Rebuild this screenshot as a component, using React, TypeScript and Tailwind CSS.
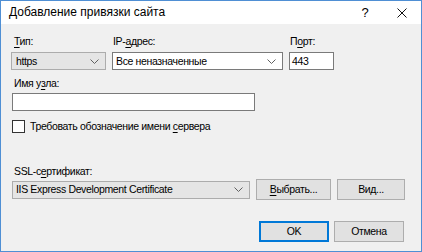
import React from "react";

function Chevron() {
  return (
    <svg width="9" height="5" viewBox="0 0 9 5" className="shrink-0">
      <path d="M0.5 0.5 L4.5 4.5 L8.5 0.5" fill="none" stroke="#606060" strokeWidth="1" />
    </svg>
  );
}

function U({ children }: { children: React.ReactNode }) {
  return <span className="underline underline-offset-[2px] decoration-1">{children}</span>;
}

function Button({
  children,
  className = "",
  primary = false,
}: {
  children: React.ReactNode;
  className?: string;
  primary?: boolean;
}) {
  return (
    <div
      className={
        "h-[21px] flex items-center justify-center bg-[#e1e1e1] border " +
        (primary ? "border-[#0078d7] shadow-[inset_0_0_0_1px_#0078d7]" : "border-[#adadad]") +
        " " +
        className
      }
    >
      {children}
    </div>
  );
}

export default function App() {
  return (
    <div className="w-[422px] h-[252px] flex flex-col border border-[#4f8fd4] bg-[#f0f0f0] text-[10.5px] tracking-[-0.35px] leading-[15px] text-black font-['Liberation_Sans','Noto_Sans',sans-serif]">
      <div className="h-[23px] shrink-0 bg-white flex items-center pl-[8px] text-[12px] tracking-normal">
        <span className="flex-1">Добавление привязки сайта</span>
        <span className="w-[36px] text-center text-[13px]">?</span>
        <span className="w-[38px] flex justify-center">
          <svg width="10" height="10" viewBox="0 0 10 10">
            <path d="M0.5 0.5 L9.5 9.5 M9.5 0.5 L0.5 9.5" stroke="#111" strokeWidth="1" />
          </svg>
        </span>
      </div>

      <div className="flex-1 flex flex-col pl-[10px] pt-[10px]">
        {/* row 1 */}
        <div className="flex">
          <div className="w-[95px] flex flex-col">
            <span className="pl-[3px] mb-[3px]">
              <U>Т</U>ип:
            </span>
            <div className="h-[18px] flex items-center justify-between pl-[4px] pr-[6px] bg-[#e5e5e5] border border-[#acacac]">
              <span>https</span>
              <Chevron />
            </div>
          </div>
          <div className="w-[171px] ml-[6px] flex flex-col">
            <span className="pl-[1px] mb-[3px]">
              IP-<U>а</U>дрес:
            </span>
            <div className="h-[18px] flex items-center justify-between pl-[3px] pr-[6px] bg-white border border-[#7a7a7a]">
              <span>Все неназначенные</span>
              <Chevron />
            </div>
          </div>
          <div className="w-[45px] ml-[6px] flex flex-col">
            <span className="pl-[1px] mb-[3px]">
              П<U>о</U>рт:
            </span>
            <div className="h-[18px] flex items-center pl-[2px] bg-white border border-[#7a7a7a]">
              443
            </div>
          </div>
        </div>

        {/* host name */}
        <span className="mt-[6px] pl-[3px] mb-[2px]">
          Имя у<U>з</U>ла:
        </span>
        <div className="w-[243px] h-[18px] ml-[1px] bg-white border border-[#7a7a7a]" />

        <div className="mt-[8px] ml-[1px] flex items-center gap-[5px]">
          <div className="w-[13px] h-[13px] bg-white border border-[#333]" />
          <span>
            Требовать обозначение имени <U>с</U>ервера
          </span>
        </div>

        {/* ssl */}
        <span className="mt-[30px] pl-[3px]">
          SSL-с<U>е</U>ртификат:
        </span>
        <div className="flex items-center">
          <div className="w-[238px] ml-[1px] h-[18px] flex items-center justify-between pl-[3px] pr-[6px] bg-[#e5e5e5] border border-[#acacac]">
            <span>IIS Express Development Certificate</span>
            <Chevron />
          </div>
          <Button className="w-[75px] ml-[6px]">
            <span>
              <U>В</U>ыбрать...
            </span>
          </Button>
          <Button className="w-[68px] ml-[6px]">Вид...</Button>
        </div>

        <div className="mt-[21px] flex justify-end pr-[17px] gap-[5px]">
          <Button primary className="w-[70px]">
            OK
          </Button>
          <Button className="w-[70px]">Отмена</Button>
        </div>
      </div>
    </div>
  );
}
